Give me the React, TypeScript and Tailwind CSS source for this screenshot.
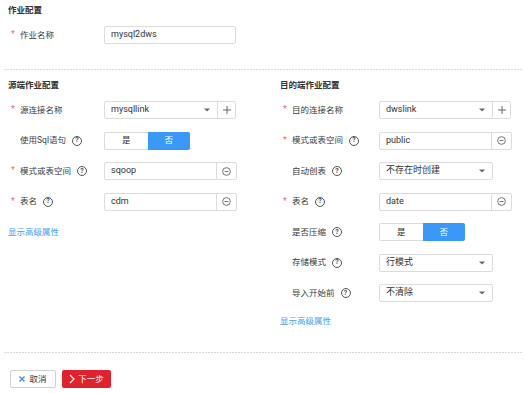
import type { ReactNode } from "react";

const FONT = "font-['Roboto','Noto_Sans_CJK_SC',sans-serif]";

function Dashed() {
  return (
    <div className="mx-[4px] h-px bg-[repeating-linear-gradient(90deg,#d9d9d9_0_2px,transparent_2px_3px)]" />
  );
}

function Help() {
  return (
    <span className="ml-[6px] inline-flex h-[10px] w-[10px] items-center justify-center rounded-full border border-[#555] text-[7px] leading-none font-bold text-[#555]">
      ?
    </span>
  );
}

function Caret() {
  return (
    <svg width="6" height="4" viewBox="0 0 6 4" className="mr-[7px]">
      <path d="M0 0.5 L6 0.5 L3 3.5 Z" fill="#666" />
    </svg>
  );
}

function Label({ text, required, help, width }: { text: string; required?: boolean; help?: boolean; width: string }) {
  return (
    <div className={`flex shrink-0 items-center ${width}`}>
      <span className="w-[12px] pl-[3px] text-[9px] text-[#f56c6c]">{required ? "*" : ""}</span>
      <span className="text-[8.5px] text-[#3a3a3a]">{text}</span>
      {help && <Help />}
    </div>
  );
}

function TextInput({ value, w = "w-[132px]" }: { value: string; w?: string }) {
  return (
    <div className={`flex h-[18px] ${w} items-center rounded-[2px] border border-[#dcdcdc] px-[6px] text-[9px] text-[#333]`}>
      {value}
    </div>
  );
}

function Select({ value }: { value: string }) {
  return (
    <div className="flex h-[18px] w-[114px] items-center justify-between rounded-[2px] border border-[#dcdcdc] pl-[6px] text-[9px] text-[#333]">
      <span>{value}</span>
      <Caret />
    </div>
  );
}

function SelectAdd({ value }: { value: string }) {
  return (
    <div className="flex h-[18px] w-[132px] rounded-[2px] border border-[#dcdcdc] text-[9px] text-[#333]">
      <div className="flex flex-1 items-center justify-between pl-[6px]">
        <span>{value}</span>
        <Caret />
      </div>
      <div className="flex w-[18px] items-center justify-center border-l border-[#dcdcdc]">
        <svg width="8" height="8" viewBox="0 0 8 8">
          <path d="M4 0 V8 M0 4 H8" stroke="#666" strokeWidth="1" />
        </svg>
      </div>
    </div>
  );
}

function InputMinus({ value }: { value: string }) {
  return (
    <div className="flex h-[18px] w-[133px] rounded-[2px] border border-[#dcdcdc] text-[9px] text-[#333]">
      <div className="flex flex-1 items-center pl-[6px]">{value}</div>
      <div className="flex w-[20px] items-center justify-center border-l border-[#dcdcdc]">
        <svg width="9" height="9" viewBox="0 0 10 10">
          <circle cx="5" cy="5" r="4.3" fill="none" stroke="#666" strokeWidth="1" />
          <path d="M2.8 5 H7.2" stroke="#666" strokeWidth="1" />
        </svg>
      </div>
    </div>
  );
}

function Toggle() {
  return (
    <div className="flex h-[18px] w-[86px] text-[8.5px]">
      <div className="flex flex-1 items-center justify-center rounded-l-[2px] border border-r-0 border-[#dcdcdc] text-[#333]">是</div>
      <div className="flex flex-1 items-center justify-center rounded-r-[2px] bg-[#3a98f8] text-white">否</div>
    </div>
  );
}

function Row({ label, children }: { label: ReactNode; children: ReactNode }) {
  return (
    <div className="flex h-[18px] items-center">
      {label}
      {children}
    </div>
  );
}

function Title({ children }: { children: ReactNode }) {
  return <div className="h-[12px] text-[8.5px] leading-[12px] font-bold text-[#333]">{children}</div>;
}

function Link() {
  return <div className="h-[12px] text-[8.5px] leading-[12px] text-[#4a9ff5]">显示高级属性</div>;
}

export default function App() {
  const lw = "w-[96px]";
  const rw = "w-[99px]";
  return (
    <div className={`h-[393px] w-[526px] overflow-hidden bg-white ${FONT}`}>
      <div className="px-[8px] pt-[4px]">
        <Title>作业配置</Title>
        <div className="mt-[10px]">
          <Row label={<Label text="作业名称" required width={lw} />}>
            <TextInput value="mysql2dws" />
          </Row>
        </div>
      </div>
      <div className="mt-[25px]">
        <Dashed />
      </div>
      <div className="mt-[9px] flex items-start">
        <div className="w-[280px] pl-[8px]">
          <Title>源端作业配置</Title>
          <div className="mt-[10px] flex flex-col gap-[12.5px]">
            <Row label={<Label text="源连接名称" required width={lw} />}>
              <SelectAdd value="mysqllink" />
            </Row>
            <Row label={<Label text="使用Sql语句" help width={lw} />}>
              <Toggle />
            </Row>
            <Row label={<Label text="模式或表空间" required help width={lw} />}>
              <InputMinus value="sqoop" />
            </Row>
            <Row label={<Label text="表名" required help width={lw} />}>
              <InputMinus value="cdm" />
            </Row>
          </div>
          <div className="mt-[15px]">
            <Link />
          </div>
        </div>
        <div className="w-[240px]">
          <Title>目的端作业配置</Title>
          <div className="mt-[10px] flex flex-col gap-[12.5px]">
            <Row label={<Label text="目的连接名称" required width={rw} />}>
              <SelectAdd value="dwslink" />
            </Row>
            <Row label={<Label text="模式或表空间" required help width={rw} />}>
              <InputMinus value="public" />
            </Row>
            <Row label={<Label text="自动创表" help width={rw} />}>
              <Select value="不存在时创建" />
            </Row>
            <Row label={<Label text="表名" required help width={rw} />}>
              <InputMinus value="date" />
            </Row>
            <Row label={<Label text="是否压缩" help width={rw} />}>
              <Toggle />
            </Row>
            <Row label={<Label text="存储模式" help width={rw} />}>
              <Select value="行模式" />
            </Row>
            <Row label={<Label text="导入开始前" help width={rw} />}>
              <Select value="不清除" />
            </Row>
          </div>
          <div className="mt-[13px]">
            <Link />
          </div>
        </div>
      </div>
      <div className="mt-[25px]">
        <Dashed />
      </div>
      <div className="mt-[17px] flex gap-[6px] pl-[10px]">
        <button className="flex h-[18px] w-[46px] items-center justify-center gap-[4px] rounded-[2px] border border-[#d0d0d0] bg-white text-[8.5px] text-[#333]">
          <svg width="6" height="6" viewBox="0 0 6 6">
            <path d="M0.5 0.5 L5.5 5.5 M5.5 0.5 L0.5 5.5" stroke="#3d8ef0" strokeWidth="1.3" />
          </svg>
          取消
        </button>
        <button className="flex h-[18px] w-[49px] items-center justify-center gap-[3px] rounded-[2px] bg-[#e0222f] text-[8.5px] text-white">
          <svg width="6" height="10" viewBox="0 0 6 10">
            <path d="M1 1 L5 5 L1 9" fill="none" stroke="white" strokeWidth="1.2" />
          </svg>
          下一步
        </button>
      </div>
    </div>
  );
}
